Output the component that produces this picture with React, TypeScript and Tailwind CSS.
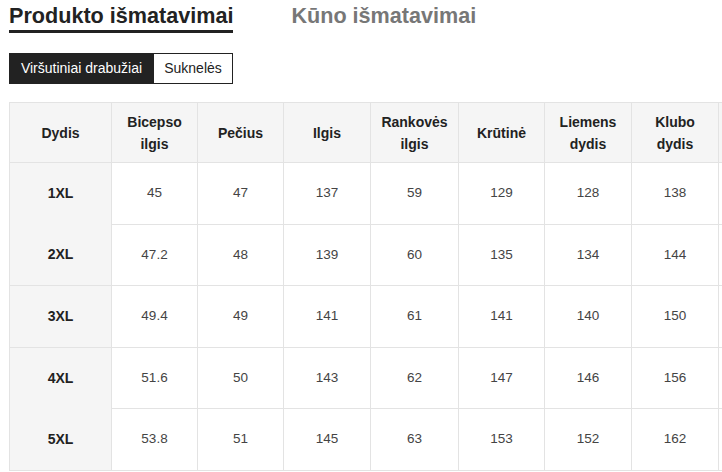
import React from "react";

const headers: string[][] = [
  ["Dydis"],
  ["Bicepso", "ilgis"],
  ["Pečius"],
  ["Ilgis"],
  ["Rankovės", "ilgis"],
  ["Krūtinė"],
  ["Liemens", "dydis"],
  ["Klubo", "dydis"],
  [""],
];

const widths = [102, 86, 86, 87, 88, 86, 87, 87, 100];

const rows: { size: string; vals: string[]; h: number; topLine: boolean }[] = [
  { size: "1XL", vals: ["45", "47", "137", "59", "129", "128", "138"], h: 62, topLine: true },
  { size: "2XL", vals: ["47.2", "48", "139", "60", "135", "134", "144"], h: 61, topLine: false },
  { size: "3XL", vals: ["49.4", "49", "141", "61", "141", "140", "150"], h: 62, topLine: true },
  { size: "4XL", vals: ["51.6", "50", "143", "62", "147", "146", "156"], h: 61, topLine: true },
  { size: "5XL", vals: ["53.8", "51", "145", "63", "153", "152", "162"], h: 62, topLine: false },
];

export default function App() {
  return (
    <div
      className="w-[722px] h-[472px] overflow-hidden bg-white text-[#222]"
      style={{ fontFamily: '"Liberation Sans", Arial, sans-serif' }}
    >
      <div className="pl-[9px] flex items-start gap-[58px]">
        <div className="flex flex-col">
          <div className="text-[21.6px] font-bold leading-[30px] pt-[1px] text-[#222] whitespace-nowrap">
            Produkto išmatavimai
          </div>
          <div className="h-[3px] -mt-[1px] bg-[#222]" />
        </div>
        <div className="text-[21.6px] font-bold leading-[30px] pt-[1px] text-[#777] whitespace-nowrap">
          Kūno išmatavimai
        </div>
      </div>

      <div className="pl-[9px] mt-[20px] flex">
        <div className="h-[31px] w-[145px] flex items-center justify-center bg-[#222] text-white text-[14px] whitespace-nowrap">
          Viršutiniai drabužiai
        </div>
        <div className="h-[31px] w-[79px] flex items-center justify-center border border-l-0 border-[#222] text-[#222] text-[14px] whitespace-nowrap">
          Suknelės
        </div>
      </div>

      <div className="mt-[18px] pl-[9px]">
        <table className="table-fixed border-collapse w-[809px] text-[13.5px]">
          <colgroup>
            {widths.map((w, i) => (
              <col key={i} style={{ width: w }} />
            ))}
          </colgroup>
          <thead>
            <tr className="h-[60px] bg-[#f5f5f5]">
              {headers.map((h, i) => (
                <th
                  key={i}
                  className="border border-[#e3e3e3] font-bold text-[14px] text-[#222] text-center align-middle leading-[22px] p-0"
                >
                  {h.map((l, j) => (
                    <div key={j}>{l}</div>
                  ))}
                </th>
              ))}
            </tr>
          </thead>
          <tbody>
            {rows.map((r, ri) => (
              <tr key={ri} style={{ height: r.h }}>
                <td
                  className={
                    "bg-[#f5f5f5] border-l border-r border-[#e3e3e3] font-bold text-[14px] text-[#222] text-center align-middle p-0 " +
                    (r.topLine ? "border-t " : "border-t-0 ") +
                    (ri === rows.length - 1 ? "border-b" : "")
                  }
                >
                  {r.size}
                </td>
                {r.vals.map((v, vi) => (
                  <td
                    key={vi}
                    className="border border-[#e3e3e3] text-[#444] text-center align-middle p-0"
                  >
                    {v}
                  </td>
                ))}
                <td className="border border-[#e3e3e3] p-0" />
              </tr>
            ))}
          </tbody>
        </table>
      </div>
    </div>
  );
}
